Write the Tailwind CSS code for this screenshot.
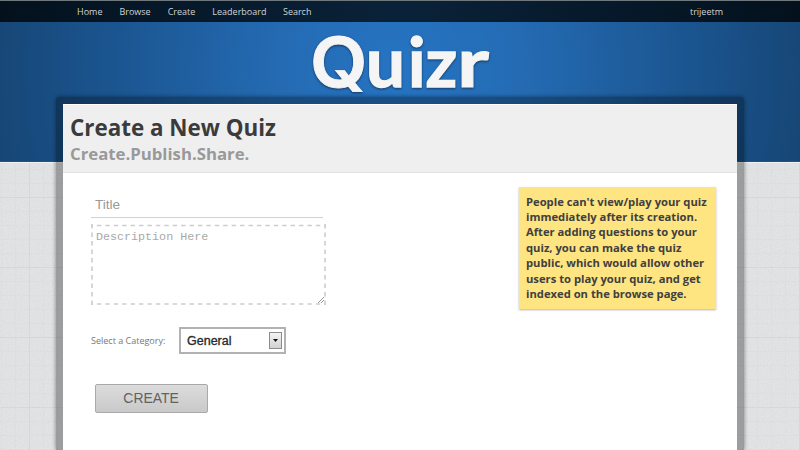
<!DOCTYPE html>
<html lang="en">
<head>
<meta charset="utf-8">
<title>Quizr</title>
<script src="https://cdn.jsdelivr.net/npm/@tailwindcss/browser@4"></script>
</head>
<body class="relative h-[450px] w-[800px] overflow-hidden bg-[#e1e3e5] font-['Open_Sans','Noto_Sans',sans-serif]">
<!-- page backdrop: textured grid and blue banner -->
<svg class="absolute inset-0" width="800" height="450">
  <defs>
    <filter id="grain" x="0" y="0" width="100%" height="100%"><feTurbulence type="fractalNoise" baseFrequency="0.6" numOctaves="2" seed="4"/><feColorMatrix values="0 0 0 0 0.4  0 0 0 0 0.4  0 0 0 0 0.4  0.22 0 0 0 -0.08"/></filter>
    <pattern id="grid" width="70" height="70" patternUnits="userSpaceOnUse" x="29" y="197">
      <path d="M0 .5H70M.5 0V70" stroke="#c9cccf" stroke-opacity=".4"/>
      <path d="M0 14.5H70M0 28.5H70M0 42.5H70M0 56.5H70M14.5 0V70M28.5 0V70M42.5 0V70M56.5 0V70" stroke="#cfd2d5" stroke-opacity=".12"/>
    </pattern>
    <radialGradient id="blue" gradientUnits="userSpaceOnUse" cx="0" cy="0" r="1" gradientTransform="translate(400 70) scale(410 420)">
      <stop offset="0" stop-color="#2674c3"/><stop offset=".3" stop-color="#246bb3"/><stop offset=".7" stop-color="#1b5590"/><stop offset="1" stop-color="#164675"/>
    </radialGradient>
  </defs>
  <rect y="162" width="800" height="288" fill="url(#grid)"/>
  <rect y="162" width="800" height="288" filter="url(#grain)"/>
  <rect width="800" height="162" fill="url(#blue)"/>
  <rect y="161" width="800" height="1" fill="#4a4a4c"/>
  <rect y="162" width="800" height="1" fill="#f0f0f0"/>
</svg>

<div class="relative flex h-full flex-col">
  <nav class="flex h-[22px] shrink-0 items-center justify-between border-t border-[#6f787d] bg-linear-to-r from-[#04111d] via-[#0a2239] to-[#04111d] pr-[77px] pl-[77px] text-[9px] leading-[20px] text-[#d0d4d8]">
    <div class="flex gap-[17px]"><a>Home</a><a>Browse</a><a>Create</a><a>Leaderboard</a><a class="-ml-[.5px]">Search</a></div>
    <a>trijeetm</a>
  </nav>

  <header class="flex h-[75px] shrink-0 justify-center">
    <h1>
      <svg class="overflow-visible drop-shadow-[0_1px_1px_rgba(0,0,0,0.5)]" width="180" height="75" fill="#f5f5f5" stroke="#f5f5f5" aria-label="Quizr">
        <text y="64.5" class="font-[Inter,sans-serif] text-[69px] font-semibold" stroke-width=".8" x="0" textLength="57.5" lengthAdjust="spacingAndGlyphs">Q</text>
        <text y="64.5" class="font-[Lato,sans-serif] text-[69px] font-bold" stroke-width="1.4" x="56 98 115.5">uiz</text>
        <text y="64.5" class="font-[Lato,sans-serif] text-[69px] font-bold" stroke-width="1" x="147" textLength="32" lengthAdjust="spacingAndGlyphs">r</text>
      </svg>
    </h1>
  </header>

  <div class="ml-[56px] flex w-[688px] flex-1 flex-col rounded-t-[3px] bg-black/30 px-[7px] pt-[7px] shadow-[0_0_4px_rgba(0,0,0,.45)]">
    <main class="flex flex-1 flex-col bg-white">
      <div class="h-[69px] border-t border-b border-t-white border-b-[#e2e2e2] bg-[#efefef] pl-[7px]">
        <h2 class="pt-[8px] text-[22.4px] leading-[30px] font-bold text-[#3b3b3b]">Create a New Quiz</h2>
        <h3 class="-mt-px text-[16.75px] leading-[24px] font-bold text-[#999]">Create.Publish.Share.</h3>
      </div>
      <div class="flex flex-1 justify-between pr-[21px] pl-[28px]">
        <form class="flex w-[236px] flex-col">
          <div class="mt-[17px] flex h-[28px] w-[232px] items-center border-b border-[#d2d2d2] pt-[4px] pl-[4px] font-['Liberation_Sans',sans-serif] text-[13.6px] text-[#999]">Title</div>
          <div class="relative mt-[6px] h-[81px] w-[235px] pt-[6px] pl-[5px] font-['Liberation_Mono',monospace] text-[11.7px] leading-[15px] text-[#a9a9a9]">
            <svg class="absolute inset-0" width="235" height="81" fill="none" stroke="#cdcdcd" stroke-width="1.6">
              <path d="M0 1.5H235M0 80H235" stroke-dasharray="4.4 4.02" stroke-dashoffset="2.5"/>
              <path d="M1 0V81M234 0V81" stroke-dasharray="4.4 4.1"/>
              <path d="M227 79L233 73M230 79L233 76" stroke="#999" stroke-width="1"/>
            </svg>Description Here</div>
          <div class="mt-[22px] flex items-center">
            <label class="w-[88px] text-[9px] text-[#777]">Select a Category:</label>
            <div class="flex h-[27px] w-[107px] items-center justify-between border-2 border-[#b2b2b2] bg-white pr-[2px] pl-[6px] font-['Liberation_Sans',sans-serif] text-[12.5px] text-[#2b2b2b] [-webkit-text-stroke:.35px_#2b2b2b]"><span class="pt-px">General</span>
              <span class="flex h-[17px] w-[13px] items-center justify-center border border-[#8c8c8c] bg-linear-to-b from-[#f4f4f4] to-[#d2d2d2]"><svg width="5" height="3"><path d="M0 0H5L2.5 3Z" fill="#111"/></svg></span>
            </div>
          </div>
          <button type="button" class="mt-[30px] ml-[3.5px] h-[29px] w-[113px] rounded-[2px] border border-[#a9a9a9] bg-linear-to-b from-[#dcdcdc] to-[#c9c9c9] font-['Liberation_Sans',sans-serif] text-[13.9px] text-[#626262]">CREATE</button>
        </form>
        <aside class="mt-[14px] h-[122px] w-[197px] bg-[#ffe482] pt-[6.5px] pl-[7px] text-[11.22px] leading-[15.45px] font-bold whitespace-nowrap text-[#404040] shadow-[0_1px_2px_rgba(0,0,0,.3)]">People can't view/play your quiz<br>immediately after its creation.<br>After adding questions to your<br>quiz, you can make the quiz<br>public, which would allow other<br>users to play your quiz, and get<br>indexed on the browse page.</aside>
      </div>
    </main>
  </div>
</div>
</body>
</html>
